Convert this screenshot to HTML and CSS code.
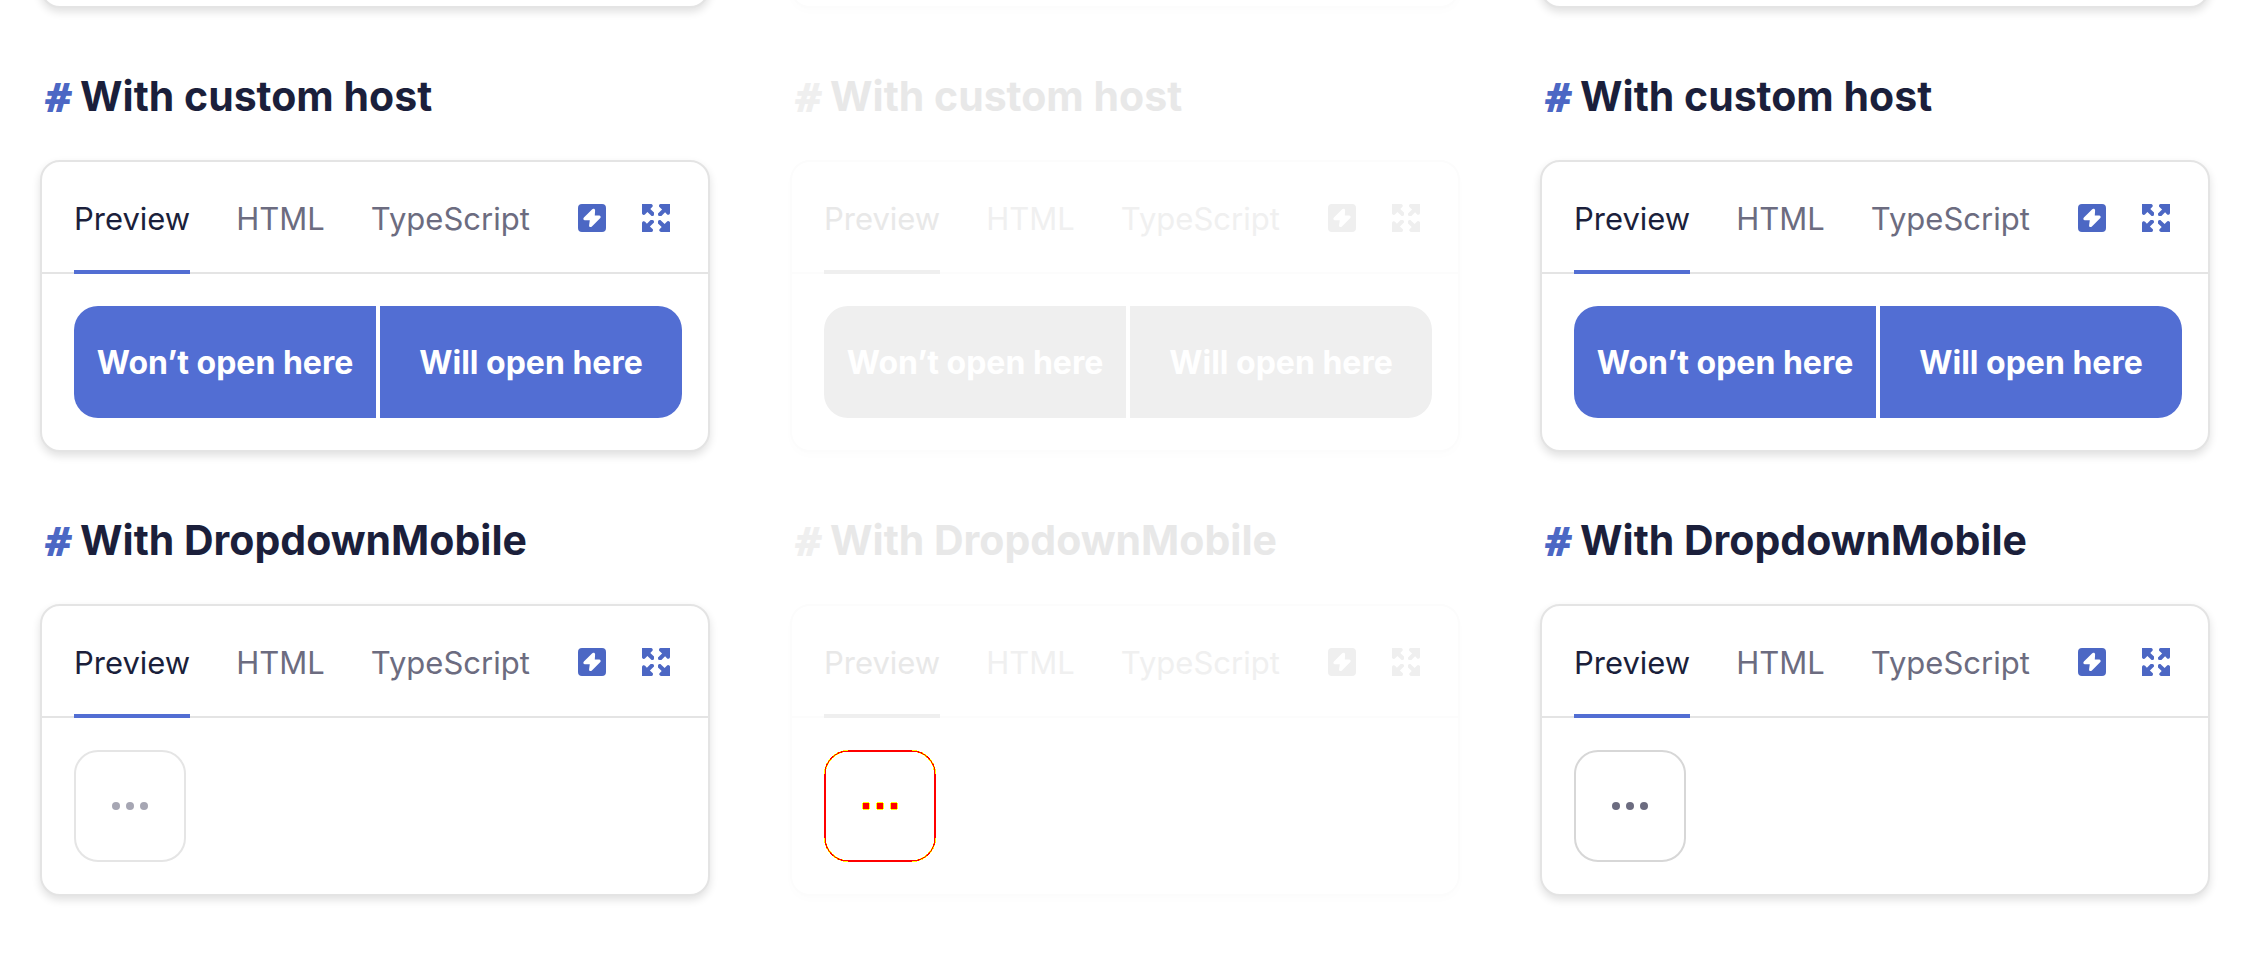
FILE: index.html
```
<!DOCTYPE html>
<html lang="en">
<head>
<meta charset="utf-8">
<title>Dropdown examples</title>
<link rel="stylesheet" href="styles.css">
</head>
<body>
<svg class="sprite" aria-hidden="true">
  <symbol id="bolt" viewBox="0 0 28 28">
    <path fill="currentColor" fill-rule="evenodd" d="M4 0H24a4 4 0 0 1 4 4V24a4 4 0 0 1-4 4H4a4 4 0 0 1-4-4V4a4 4 0 0 1 4-4ZM14 5.400 5.900 13.400c-1.100 1.100-.5 2.800 1 2.800h4.900l-.7 5c-.2 1.900 1.600 2.400 2.800 1.200l8.200-8.100c1.100-1.100.5-2.800-1-2.800h-4.300l.3-4.900c.1-1.900-1.900-2.400-3.100-1.200Z"/>
  </symbol>
  <symbol id="expand" viewBox="0 0 28 28">
    <g id="arrow">
      <path fill="currentColor" d="M0 0H9a1.800 1.800 0 0 1 1.200 3.100L8.300 4.900 12 8.600V10.500a1.500 1.500 0 0 1-1.500 1.500H9.600L5.400 7.900 3.200 10.300A1.800 1.800 0 0 1 0 9Z"/>
    </g>
    <use href="#arrow" transform="rotate(90 14 14)"/>
    <use href="#arrow" transform="rotate(180 14 14)"/>
    <use href="#arrow" transform="rotate(270 14 14)"/>
  </symbol>
  <symbol id="dots" viewBox="0 0 36 8">
    <circle cx="4" cy="4" r="4" fill="currentColor"/>
    <circle cx="18" cy="4" r="4" fill="currentColor"/>
    <circle cx="32" cy="4" r="4" fill="currentColor"/>
  </symbol>
  <symbol id="dots-diff" viewBox="0 0 36 8">
    <path fill="#ff0" d="M1 0H7V1H8V7H7V8H1V7H0V1H1ZM15 0H21V1H22V7H21V8H15V7H14V1H15ZM29 0H35V1H36V7H35V8H29V7H28V1H29Z"/>
    <path fill="red" d="M1 1H7V7H1ZM15 1H21V7H15ZM29 1H35V7H29Z"/>
  </symbol>
</svg>
<main class="compare">
  <div class="pane before">
    <div class="card tail"></div>
    <section>
      <h2 class="title"><a class="hash" href="#host-a">#</a><span id="host-a">With custom host</span></h2>
      <div class="card">
        <div class="bar">
          <div class="tabs" role="tablist">
            <button class="tab active" role="tab" aria-selected="true">Preview</button>
            <button class="tab" role="tab">HTML</button>
            <button class="tab" role="tab">TypeScript</button>
          </div>
          <div class="tools">
            <button class="tool" aria-label="Open in StackBlitz"><svg><use href="#bolt"/></svg></button>
            <button class="tool" aria-label="Fullscreen"><svg><use href="#expand"/></svg></button>
          </div>
        </div>
        <div class="demo">
          <div class="group"><button class="action">Won’t open here</button><button class="action">Will open here</button></div>
        </div>
      </div>
    </section>
    <section>
      <h2 class="title"><a class="hash" href="#mobile-a">#</a><span id="mobile-a">With DropdownMobile</span></h2>
      <div class="card">
        <div class="bar">
          <div class="tabs" role="tablist">
            <button class="tab active" role="tab" aria-selected="true">Preview</button>
            <button class="tab" role="tab">HTML</button>
            <button class="tab" role="tab">TypeScript</button>
          </div>
          <div class="tools">
            <button class="tool" aria-label="Open in StackBlitz"><svg><use href="#bolt"/></svg></button>
            <button class="tool" aria-label="Fullscreen"><svg><use href="#expand"/></svg></button>
          </div>
        </div>
        <div class="demo">
          <button class="more" aria-label="More"><svg><use href="#dots"/></svg></button>
        </div>
      </div>
    </section>
  </div>
  <div class="pane diff">
    <div class="card tail"></div>
    <section>
      <h2 class="title"><a class="hash" href="#host-b">#</a><span id="host-b">With custom host</span></h2>
      <div class="card">
        <div class="bar">
          <div class="tabs" role="tablist">
            <button class="tab active" role="tab" aria-selected="true">Preview</button>
            <button class="tab" role="tab">HTML</button>
            <button class="tab" role="tab">TypeScript</button>
          </div>
          <div class="tools">
            <button class="tool" aria-label="Open in StackBlitz"><svg><use href="#bolt"/></svg></button>
            <button class="tool" aria-label="Fullscreen"><svg><use href="#expand"/></svg></button>
          </div>
        </div>
        <div class="demo">
          <div class="group"><button class="action">Won’t open here</button><button class="action">Will open here</button></div>
        </div>
      </div>
    </section>
    <section>
      <h2 class="title"><a class="hash" href="#mobile-b">#</a><span id="mobile-b">With DropdownMobile</span></h2>
      <div class="card">
        <div class="bar">
          <div class="tabs" role="tablist">
            <button class="tab active" role="tab" aria-selected="true">Preview</button>
            <button class="tab" role="tab">HTML</button>
            <button class="tab" role="tab">TypeScript</button>
          </div>
          <div class="tools">
            <button class="tool" aria-label="Open in StackBlitz"><svg><use href="#bolt"/></svg></button>
            <button class="tool" aria-label="Fullscreen"><svg><use href="#expand"/></svg></button>
          </div>
        </div>
        <div class="demo">
          <button class="more changed" aria-label="More">
            <svg class="outline" viewBox="0 0 112 112" shape-rendering="crispEdges" fill="none">
              <path stroke="#ff0" stroke-width="2" d="M1 24A23 23 0 0 1 24 1M88 1A23 23 0 0 1 111 24M111 88A23 23 0 0 1 88 111M24 111A23 23 0 0 1 1 88"/>
              <path stroke="red" stroke-width="1" d="M1 24A23 23 0 0 1 24 1M88 1A23 23 0 0 1 111 24M111 88A23 23 0 0 1 88 111M24 111A23 23 0 0 1 1 88"/>
              <path stroke="red" stroke-width="2" d="M24 1H88M111 24V88M88 111H24M1 88V24"/>
            </svg>
            <svg><use href="#dots-diff"/></svg>
          </button>
        </div>
      </div>
    </section>
  </div>
  <div class="pane after">
    <div class="card tail"></div>
    <section>
      <h2 class="title"><a class="hash" href="#host-c">#</a><span id="host-c">With custom host</span></h2>
      <div class="card">
        <div class="bar">
          <div class="tabs" role="tablist">
            <button class="tab active" role="tab" aria-selected="true">Preview</button>
            <button class="tab" role="tab">HTML</button>
            <button class="tab" role="tab">TypeScript</button>
          </div>
          <div class="tools">
            <button class="tool" aria-label="Open in StackBlitz"><svg><use href="#bolt"/></svg></button>
            <button class="tool" aria-label="Fullscreen"><svg><use href="#expand"/></svg></button>
          </div>
        </div>
        <div class="demo">
          <div class="group"><button class="action">Won’t open here</button><button class="action">Will open here</button></div>
        </div>
      </div>
    </section>
    <section>
      <h2 class="title"><a class="hash" href="#mobile-c">#</a><span id="mobile-c">With DropdownMobile</span></h2>
      <div class="card">
        <div class="bar">
          <div class="tabs" role="tablist">
            <button class="tab active" role="tab" aria-selected="true">Preview</button>
            <button class="tab" role="tab">HTML</button>
            <button class="tab" role="tab">TypeScript</button>
          </div>
          <div class="tools">
            <button class="tool" aria-label="Open in StackBlitz"><svg><use href="#bolt"/></svg></button>
            <button class="tool" aria-label="Fullscreen"><svg><use href="#expand"/></svg></button>
          </div>
        </div>
        <div class="demo">
          <button class="more" aria-label="More"><svg><use href="#dots"/></svg></button>
        </div>
      </div>
    </section>
  </div>
</main>
</body>
</html>
```
FILE: styles.css
```
* {
  box-sizing: border-box;
}

body {
  margin: 0;
  background: #fff;
  font-family: Inter, "Open Sans", sans-serif;
  overflow-x: hidden;
}

button {
  margin: 0;
  padding: 0;
  border: 0;
  background: none;
  font: inherit;
  color: inherit;
  cursor: pointer;
}

.sprite {
  position: absolute;
  width: 0;
  height: 0;
}

.compare {
  display: grid;
  grid-template-columns: repeat(3, minmax(0, 1fr));
}

.pane {
  --text: #1b1f3b;
  --muted: #6c6c80;
  --link: #4c67c4;
  --primary: #526ed3;
  --on-primary: #fff;
  --line: #e4e4e4;
  --outline: #d7d7d7;
  --dots: #6c6c80;
  --shadow: rgba(0, 0, 0, 0.12);
  padding: 0 40px 64px;
}

.before {
  --outline: #e5e5e5;
  --dots: #a6a6b3;
}

.diff {
  --text: #e8e8e8;
  --muted: #f0f0f0;
  --link: #efefef;
  --primary: #efefef;
  --line: #fcfcfc;
  --shadow: rgba(0, 0, 0, 0.012);
}

.card {
  border: 2px solid var(--line);
  border-radius: 20px;
  background: #fff;
  box-shadow: 0 4px 8px var(--shadow);
}

.tail {
  height: 40px;
  margin-top: -32px;
}

.title {
  display: flex;
  gap: 4px;
  margin: 0;
  padding: 60px 0 36px;
  color: var(--text);
  font-size: 41px;
  font-weight: 700;
  line-height: 56px;
}

.hash {
  width: 36px;
  color: var(--link);
  font-family: "Open Sans", sans-serif;
  font-style: italic;
  font-weight: 800;
  text-align: center;
  text-decoration: none;
}

.bar {
  display: flex;
  justify-content: space-between;
  padding: 0 38px 0 32px;
  border-bottom: 2px solid var(--line);
}

.tabs {
  display: flex;
  gap: 46px;
  margin-bottom: -2px;
}

.tab {
  height: 112px;
  padding-top: 6px;
  border-bottom: 4px solid transparent;
  color: var(--muted);
  font-size: 31px;
  line-height: 40px;
}

.active {
  border-bottom-color: var(--primary);
  color: var(--text);
}

.tools {
  display: flex;
  align-items: center;
  gap: 36px;
  padding-top: 2px;
}

.tool {
  color: var(--link);
}

.tool svg {
  display: block;
  width: 28px;
  height: 28px;
}

.demo {
  padding: 32px 26px 32px 32px;
}

.group {
  display: grid;
  grid-template-columns: 1fr 1fr;
  gap: 4px;
  overflow: hidden;
  border-radius: 24px;
}

.action {
  height: 112px;
  background: var(--primary);
  color: var(--on-primary);
  font-size: 32px;
  font-weight: 700;
  white-space: nowrap;
}

.more {
  display: grid;
  place-items: center;
  width: 112px;
  height: 112px;
  border: 2px solid var(--outline);
  border-radius: 24px;
  color: var(--dots);
}

.more svg {
  width: 36px;
  height: 8px;
}

.changed {
  position: relative;
  border: 0;
}

.changed .outline {
  position: absolute;
  inset: 0;
  width: 100%;
  height: 100%;
}
```
